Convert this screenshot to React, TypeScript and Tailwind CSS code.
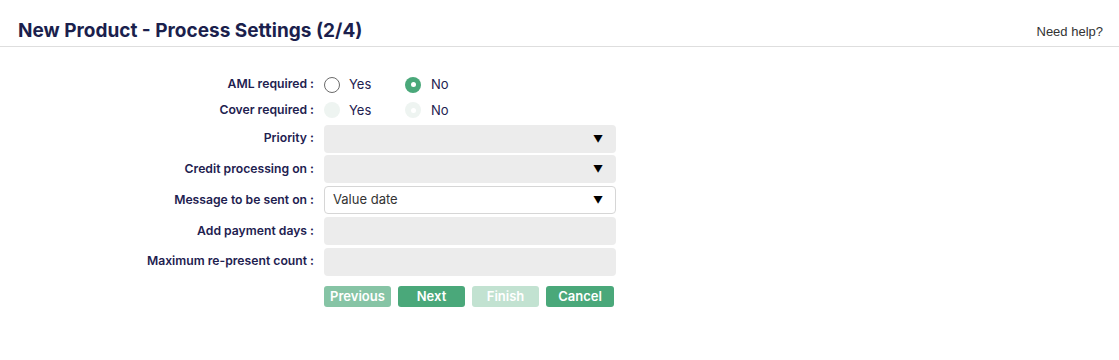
import * as React from "react";

const labelFont = { fontFamily: "Inter, 'Noto Sans', sans-serif" };

function Radio({ checked, disabled }: { checked?: boolean; disabled?: boolean }) {
  if (disabled) {
    return (
      <span className="flex h-4 w-4 items-center justify-center rounded-full bg-[#eef4f1]">
        {checked && <span className="h-[5px] w-[5px] rounded-full bg-white" />}
      </span>
    );
  }
  if (checked) {
    return (
      <span className="flex h-4 w-4 items-center justify-center rounded-full bg-[#4aa87a]">
        <span className="h-[5px] w-[5px] rounded-full bg-white" />
      </span>
    );
  }
  return <span className="h-4 w-4 rounded-full border border-[#6b6b6b] bg-white" />;
}

function RadioGroup({ value, disabled }: { value: "yes" | "no"; disabled?: boolean }) {
  return (
    <div className="flex h-[23px] items-center text-[13px] text-[#1e2150]">
      <div className="flex w-[81px] items-center gap-[9px]">
        <Radio checked={value === "yes"} disabled={disabled} />
        <span>Yes</span>
      </div>
      <div className="flex items-center gap-[10px]">
        <Radio checked={value === "no"} disabled={disabled} />
        <span>No</span>
      </div>
    </div>
  );
}

function Select({ value, filled }: { value?: string; filled?: boolean }) {
  return (
    <div
      className={
        filled
          ? "flex h-[28px] items-center justify-between rounded-[4px] border border-[#d6d6d6] bg-white pl-[8px] pr-[12px]"
          : "flex h-[28px] items-center justify-between rounded-[4px] bg-[#ececec] pl-[8px] pr-[13px]"
      }
    >
      <span className="text-[13px] text-[#333]">{value}</span>
      <span className="text-[10px] leading-none text-black">▼</span>
    </div>
  );
}

function Label({ children, tall }: { children: React.ReactNode; tall?: boolean }) {
  return (
    <div
      className={`flex items-center justify-end text-[12.2px] font-semibold text-[#1e2150] ${tall ? "h-[28px]" : "h-[23px]"}`}
      style={labelFont}
    >
      {children}
    </div>
  );
}

export default function App() {
  return (
    <div className="h-[360px] w-[1119px] bg-white" style={{ fontFamily: "Inter, 'Noto Sans', sans-serif" }}>
      <header className="flex h-[47px] items-start justify-between border-b border-[#dedede] pl-[18px] pr-[16px] pt-[16px]">
        <h1 className="text-[19px] font-bold leading-[30px] text-[#1b1f4d]">
          New Product - Process Settings (2/4)
        </h1>
        <a
          className="mt-[9px] text-[13px] leading-[14px] text-[#333]"
          style={{ fontFamily: "'Liberation Sans', Arial, sans-serif" }}
        >
          Need help?
        </a>
      </header>

      <div className="mt-[26px] grid grid-cols-[314px_292px] gap-x-[10px] gap-y-[2.75px]">
        <Label>AML required :</Label>
        <RadioGroup value="no" />

        <Label>Cover required :</Label>
        <RadioGroup value="no" disabled />

        <Label tall>Priority :</Label>
        <Select />

        <Label tall>Credit processing on :</Label>
        <Select />

        <Label tall>Message to be sent on :</Label>
        <Select value="Value date" filled />

        <Label tall>Add payment days :</Label>
        <div className="h-[28px] rounded-[4px] bg-[#ececec]" />

        <Label tall>Maximum re-present count :</Label>
        <div className="h-[28px] rounded-[4px] bg-[#ececec]" />

        <div />
        <div className="mt-[8px] flex gap-[7px] text-[13px] font-semibold text-white">
          <button className="h-[21px] w-[67px] rounded-[3px] bg-[#86c4a5]">Previous</button>
          <button className="h-[21px] w-[67px] rounded-[3px] bg-[#4aa87a]">Next</button>
          <button className="h-[21px] w-[67px] rounded-[3px] bg-[#c2e2d1]">Finish</button>
          <button className="h-[21px] w-[68px] rounded-[3px] bg-[#4aa87a]">Cancel</button>
        </div>
      </div>
    </div>
  );
}
